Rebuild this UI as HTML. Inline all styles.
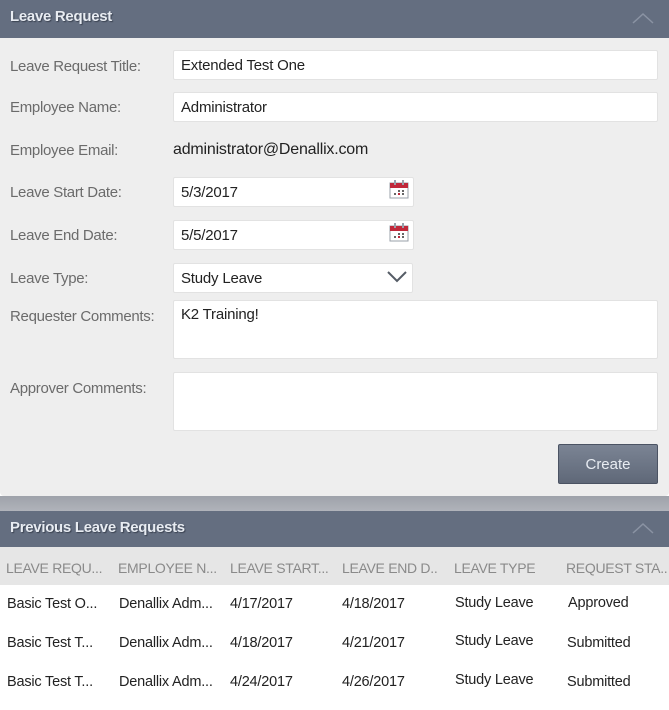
<!DOCTYPE html>
<html><head><meta charset="utf-8"><style>
body{margin:0;width:669px;height:710px;background:#fff;font-family:"Liberation Sans",sans-serif;position:relative;overflow:hidden}
.a{position:absolute}
.hdr{left:0;width:669px;background:#646e80;color:#e8ecf2;font-weight:bold;font-size:15px;letter-spacing:-0.3px;text-shadow:1px 1px 1px #3a4250}
.lbl{left:10px;color:#6b6b6b;font-size:15px;letter-spacing:-0.3px}
.in{left:173px;background:#fff;border:1px solid #e2e2e2;border-radius:2px;box-sizing:border-box;font-size:15px;color:#222;padding:6px 7px;letter-spacing:-0.2px}
.th{top:560px;color:#8a8a8a;font-size:14px;letter-spacing:-0.3px;white-space:nowrap}
.td{font-size:14.5px;color:#222;letter-spacing:-0.2px;white-space:nowrap}
</style></head><body>
<div class="a" style="left:0;top:0;width:669px;height:496px;background:#eeeeee;border-radius:0 0 4px 4px"></div>
<div class="a" style="left:0;top:496px;width:669px;height:15px;background:linear-gradient(#9ea2aa,#b0b3ba)"></div>
<div class="a hdr" style="top:0;height:38px"><span class="a" style="left:10px;top:8px">Leave Request</span></div>
<svg class="a" style="left:632px;top:12px" width="22" height="12"><path d="M1 11 L11 2 L21 11" fill="none" stroke="#8a93a3" stroke-width="1.5"/></svg>

<div class="a lbl" style="top:58px">Leave Request Title:</div>
<div class="a in" style="top:50px;width:485px;height:30px">Extended Test One</div>
<div class="a lbl" style="top:99px">Employee Name:</div>
<div class="a in" style="top:92px;width:485px;height:30px">Administrator</div>
<div class="a lbl" style="top:142px">Employee Email:</div>
<div class="a" style="left:173px;top:141px;font-size:16px;color:#222;letter-spacing:-0.2px">administrator@Denallix.com</div>
<div class="a lbl" style="top:184px">Leave Start Date:</div>
<div class="a in" style="top:177px;width:241px;height:30px">5/3/2017</div>
<div class="a lbl" style="top:227px">Leave End Date:</div>
<div class="a in" style="top:220px;width:241px;height:30px">5/5/2017</div>
<svg class="a" style="left:388px;top:179px" width="22" height="22"><rect x="2" y="4" width="18" height="15" fill="#fff" stroke="#9aa0aa"/><rect x="2" y="4" width="18" height="5" fill="#c0283a"/><rect x="6" y="1" width="2" height="5" fill="#9aa0aa"/><rect x="14" y="1" width="2" height="5" fill="#9aa0aa"/><rect x="6" y="14" width="2" height="2" fill="#666"/><rect x="10" y="14" width="2" height="2" fill="#c0283a"/><rect x="14" y="14" width="2" height="2" fill="#666"/><rect x="10" y="11" width="2" height="2" fill="#666"/><rect x="14" y="11" width="2" height="2" fill="#666"/></svg>
<svg class="a" style="left:388px;top:222px" width="22" height="22"><rect x="2" y="4" width="18" height="15" fill="#fff" stroke="#9aa0aa"/><rect x="2" y="4" width="18" height="5" fill="#c0283a"/><rect x="6" y="1" width="2" height="5" fill="#9aa0aa"/><rect x="14" y="1" width="2" height="5" fill="#9aa0aa"/><rect x="6" y="14" width="2" height="2" fill="#666"/><rect x="10" y="14" width="2" height="2" fill="#c0283a"/><rect x="14" y="14" width="2" height="2" fill="#666"/><rect x="10" y="11" width="2" height="2" fill="#666"/><rect x="14" y="11" width="2" height="2" fill="#666"/></svg>
<div class="a lbl" style="top:270px">Leave Type:</div>
<div class="a in" style="top:263px;width:240px;height:30px">Study Leave</div>
<svg class="a" style="left:386px;top:270px" width="22" height="14"><path d="M2 2 L11 11 L20 2" fill="none" stroke="#555c66" stroke-width="2"/></svg>
<div class="a lbl" style="top:308px">Requester Comments:</div>
<div class="a in" style="top:300px;width:485px;height:59px;padding-top:5px">K2 Training!</div>
<div class="a lbl" style="top:380px">Approver Comments:</div>
<div class="a in" style="top:372px;width:485px;height:59px"></div>
<div class="a" style="left:558px;top:444px;width:100px;height:40px;box-sizing:border-box;border:1px solid #4b5363;border-radius:2px;background:linear-gradient(#7b8494,#5f6878);color:#e8ecf2;font-size:15px;text-align:center;line-height:39px">Create</div>

<div class="a hdr" style="top:511px;height:36px"><span class="a" style="left:10px;top:8px">Previous Leave Requests</span></div>
<svg class="a" style="left:632px;top:522px" width="22" height="12"><path d="M1 11 L11 2 L21 11" fill="none" stroke="#8a93a3" stroke-width="1.5"/></svg>
<div class="a" style="left:0;top:547px;width:669px;height:38px;background:#e6e6e6"></div>
<div class="a th" style="left:6px">LEAVE REQU...</div>
<div class="a th" style="left:118px">EMPLOYEE N...</div>
<div class="a th" style="left:230px">LEAVE START...</div>
<div class="a th" style="left:342px">LEAVE END D..</div>
<div class="a th" style="left:454px">LEAVE TYPE</div>
<div class="a th" style="left:566px">REQUEST STA..</div>

<div class="a td" style="left:7px;top:596px">Basic Test O...</div>
<div class="a td" style="left:119px;top:596px">Denallix Adm...</div>
<div class="a td" style="left:230px;top:596px">4/17/2017</div>
<div class="a td" style="left:342px;top:596px">4/18/2017</div>
<div class="a td" style="left:455px;top:595px">Study Leave</div>
<div class="a td" style="left:568px;top:595px">Approved</div>

<div class="a td" style="left:7px;top:635px">Basic Test T...</div>
<div class="a td" style="left:119px;top:635px">Denallix Adm...</div>
<div class="a td" style="left:230px;top:635px">4/18/2017</div>
<div class="a td" style="left:342px;top:635px">4/21/2017</div>
<div class="a td" style="left:455px;top:633px">Study Leave</div>
<div class="a td" style="left:567px;top:635px">Submitted</div>

<div class="a td" style="left:7px;top:674px">Basic Test T...</div>
<div class="a td" style="left:119px;top:674px">Denallix Adm...</div>
<div class="a td" style="left:230px;top:674px">4/24/2017</div>
<div class="a td" style="left:342px;top:674px">4/26/2017</div>
<div class="a td" style="left:455px;top:672px">Study Leave</div>
<div class="a td" style="left:567px;top:674px">Submitted</div>
</body></html>
